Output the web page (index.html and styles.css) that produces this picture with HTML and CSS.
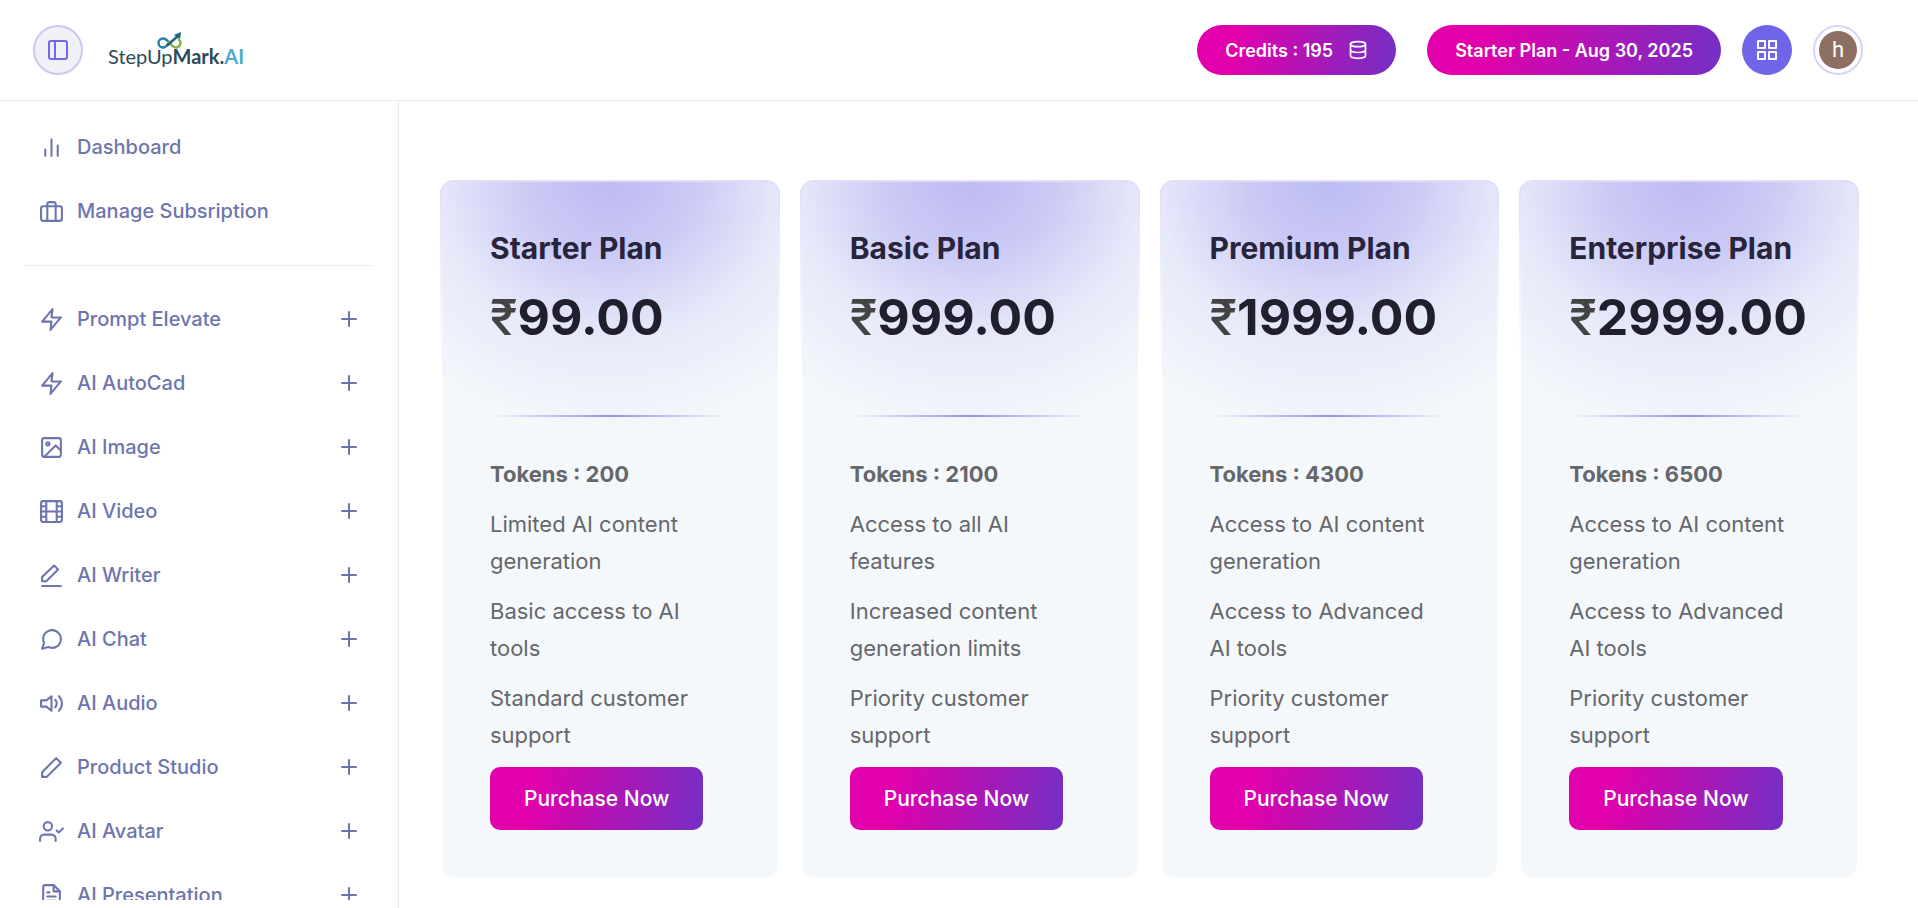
FILE: index.html
```html
<!DOCTYPE html>
<html lang="en">
<head>
    <meta charset="UTF-8">
    <meta name="viewport" content="width=device-width, initial-scale=1.0">
    <title>StepUpMark.AI - Plans</title>
    <link rel="stylesheet" href="styles.css">
</head>
<body>
    <header class="header">
        <button class="round-btn toggle-btn" type="button" aria-label="Toggle sidebar">
            <svg class="icon" viewBox="0 0 24 24"><rect x="3" y="3" width="18" height="18" rx="2"/><path d="M9 3v18"/></svg>
        </button>
        <a class="logo" href="#">
            <svg class="logo-mark" viewBox="0 0 26 18">
                <path d="M13 10C10 14 8.500 15.500 6 15.500A4.500 4.500 0 0 1 6 6.500C9 6.500 11 9 13 11.500" fill="none" stroke="#2384a5" stroke-width="2.500"/>
                <path d="M11 9c3 4 5 6.500 8 6.500A4.500 4.500 0 0 0 21 7" fill="none" stroke="#8fae45" stroke-width="2.500"/>
                <path d="M10 13.500L21 4" fill="none" stroke="#1c6680" stroke-width="2.500"/>
                <path d="M17 3l7-3-1 7z" fill="#1c6680"/>
            </svg>
            <span>StepUp<b>Mark.</b><b class="logo-ai">AI</b></span>
        </a>
        <div class="header-right">
            <a class="pill credits" href="#">Credits : 195
                <svg class="icon" viewBox="0 0 24 24"><ellipse cx="12" cy="5" rx="9" ry="3"/><path d="M21 12c0 1.660-4 3-9 3s-9-1.340-9-3"/><path d="M3 5v14c0 1.660 4 3 9 3s9-1.340 9-3V5"/></svg>
            </a>
            <a class="pill plan" href="#">Starter Plan - Aug 30, 2025</a>
            <button class="round-btn apps-btn" type="button" aria-label="Apps">
                <svg class="icon" viewBox="0 0 24 24"><rect x="3" y="3" width="7" height="7"/><rect x="14" y="3" width="7" height="7"/><rect x="14" y="14" width="7" height="7"/><rect x="3" y="14" width="7" height="7"/></svg>
            </button>
            <button class="round-btn avatar-btn" type="button" aria-label="Account"><span class="avatar">h</span></button>
        </div>
    </header>

    <div class="layout">
        <aside class="sidebar">
            <nav class="nav">
                <ul class="nav-list nav-top">
                    <li><a href="#"><svg class="icon" viewBox="0 0 24 24"><path d="M18 20V10M12 20V4M6 20v-6"/></svg><span>Dashboard</span></a></li>
                    <li><a href="#"><svg class="icon" viewBox="0 0 24 24"><rect x="2" y="7" width="20" height="14" rx="2"/><path d="M16 21V5a2 2 0 0 0-2-2h-4a2 2 0 0 0-2 2v16"/></svg><span>Manage Subsription</span></a></li>
                </ul>
                <ul class="nav-list">
                    <li><a href="#"><svg class="icon" viewBox="0 0 24 24"><path d="M13 2L3 14h9l-1 8 10-12h-9l1-8z"/></svg><span>Prompt Elevate</span><svg class="icon plus" viewBox="0 0 24 24"><path d="M12 5v14M5 12h14"/></svg></a></li>
                    <li><a href="#"><svg class="icon" viewBox="0 0 24 24"><path d="M13 2L3 14h9l-1 8 10-12h-9l1-8z"/></svg><span>AI AutoCad</span><svg class="icon plus" viewBox="0 0 24 24"><path d="M12 5v14M5 12h14"/></svg></a></li>
                    <li><a href="#"><svg class="icon" viewBox="0 0 24 24"><rect x="3" y="3" width="18" height="18" rx="2"/><circle cx="8.500" cy="8.500" r="1.500"/><path d="M21 15l-5-5L5 21"/></svg><span>AI Image</span><svg class="icon plus" viewBox="0 0 24 24"><path d="M12 5v14M5 12h14"/></svg></a></li>
                    <li><a href="#"><svg class="icon" viewBox="0 0 24 24"><rect x="2" y="2" width="20" height="20" rx="2"/><path d="M7 2v20M17 2v20M2 12h20M2 7h5M2 17h5M17 17h5M17 7h5"/></svg><span>AI Video</span><svg class="icon plus" viewBox="0 0 24 24"><path d="M12 5v14M5 12h14"/></svg></a></li>
                    <li><a href="#"><svg class="icon" viewBox="0 0 24 24"><path d="M14.500 2.500l3.800 3.800L7 17.500H3v-4z"/><path d="M3 22h18"/></svg><span>AI Writer</span><svg class="icon plus" viewBox="0 0 24 24"><path d="M12 5v14M5 12h14"/></svg></a></li>
                    <li><a href="#"><svg class="icon" viewBox="0 0 24 24"><path d="M21 11.500a8.380 8.380 0 0 1-.9 3.800 8.500 8.500 0 0 1-7.600 4.700 8.380 8.380 0 0 1-3.800-.9L3 21l1.900-5.700a8.380 8.380 0 0 1-.9-3.800 8.500 8.500 0 0 1 4.700-7.600 8.380 8.380 0 0 1 3.800-.9h.5a8.480 8.480 0 0 1 8 8v.5z"/></svg><span>AI Chat</span><svg class="icon plus" viewBox="0 0 24 24"><path d="M12 5v14M5 12h14"/></svg></a></li>
                    <li><a href="#"><svg class="icon" viewBox="0 0 24 24"><path d="M12 5L7 9H2v6h5l5 4V5z"/><path d="M19.070 4.930a10 10 0 0 1 0 14.140M15.540 8.460a5 5 0 0 1 0 7.070"/></svg><span>AI Audio</span><svg class="icon plus" viewBox="0 0 24 24"><path d="M12 5v14M5 12h14"/></svg></a></li>
                    <li><a href="#"><svg class="icon" viewBox="0 0 24 24"><path d="M16.500 3L21 7.500 7.500 21H3v-4.500z"/></svg><span>Product Studio</span><svg class="icon plus" viewBox="0 0 24 24"><path d="M12 5v14M5 12h14"/></svg></a></li>
                    <li><a href="#"><svg class="icon" viewBox="0 0 24 24"><path d="M16 21v-2a4 4 0 0 0-4-4H5a4 4 0 0 0-4 4v2"/><circle cx="8.500" cy="7" r="4"/><path d="M17 11l2 2 4-4"/></svg><span>AI Avatar</span><svg class="icon plus" viewBox="0 0 24 24"><path d="M12 5v14M5 12h14"/></svg></a></li>
                    <li><a href="#"><svg class="icon" viewBox="0 0 24 24"><path d="M14 2H6a2 2 0 0 0-2 2v16a2 2 0 0 0 2 2h12a2 2 0 0 0 2-2V8z"/><path d="M14 2v6h6M16 13H8M16 17H8M10 9H8"/></svg><span>AI Presentation</span><svg class="icon plus" viewBox="0 0 24 24"><path d="M12 5v14M5 12h14"/></svg></a></li>
                </ul>
            </nav>
        </aside>

        <main class="main">
            <div class="plans">
                <section class="card">
                    <h2>Starter Plan</h2>
                    <p class="price"><span>₹</span>99.00</p>
                    <ul class="features">
                        <li><strong>Tokens : 200</strong></li>
                        <li>Limited AI content generation</li>
                        <li>Basic access to AI tools</li>
                        <li>Standard customer support</li>
                    </ul>
                    <button class="buy" type="button">Purchase Now</button>
                </section>
                <section class="card">
                    <h2>Basic Plan</h2>
                    <p class="price"><span>₹</span>999.00</p>
                    <ul class="features">
                        <li><strong>Tokens : 2100</strong></li>
                        <li>Access to all AI features</li>
                        <li>Increased content generation limits</li>
                        <li>Priority customer support</li>
                    </ul>
                    <button class="buy" type="button">Purchase Now</button>
                </section>
                <section class="card">
                    <h2>Premium Plan</h2>
                    <p class="price"><span>₹</span>1999.00</p>
                    <ul class="features">
                        <li><strong>Tokens : 4300</strong></li>
                        <li>Access to AI content generation</li>
                        <li>Access to Advanced AI tools</li>
                        <li>Priority customer support</li>
                    </ul>
                    <button class="buy" type="button">Purchase Now</button>
                </section>
                <section class="card">
                    <h2>Enterprise Plan</h2>
                    <p class="price"><span>₹</span>2999.00</p>
                    <ul class="features">
                        <li><strong>Tokens : 6500</strong></li>
                        <li>Access to AI content generation</li>
                        <li>Access to Advanced AI tools</li>
                        <li>Priority customer support</li>
                    </ul>
                    <button class="buy" type="button">Purchase Now</button>
                </section>
            </div>
        </main>
    </div>
</body>
</html>
```
FILE: styles.css
```css
* {
    box-sizing: border-box;
}
body {
    margin: 0;
    height: 100vh;
    display: flex;
    flex-direction: column;
    font-family: Inter, sans-serif;
    background-color: #fff;
}
ul {
    list-style: none;
    margin: 0;
    padding: 0;
}
a {
    color: inherit;
    text-decoration: none;
}
button {
    font-family: inherit;
    cursor: pointer;
}
.icon {
    width: 25px;
    height: 25px;
    flex: none;
    fill: none;
    stroke: currentColor;
    stroke-width: 2;
    stroke-linecap: round;
    stroke-linejoin: round;
}

/* header */
.header {
    display: flex;
    align-items: center;
    padding: 25px 55px 25px 33px;
    border-bottom: 1px solid #ebebeb;
}
.header-right {
    display: flex;
    align-items: center;
    gap: 21px;
    margin-left: auto;
}
.round-btn {
    display: flex;
    align-items: center;
    justify-content: center;
    width: 50px;
    height: 50px;
    padding: 0;
    border: none;
    border-radius: 50%;
}
.round-btn .icon {
    width: 24px;
    height: 24px;
}
.toggle-btn {
    border: 2px solid #cdc8f3;
    background-color: #f0f1f6;
    color: #7367f0;
}
.logo {
    position: relative;
    margin-left: 25px;
    font-family: Lato, sans-serif;
    font-size: 20px;
    line-height: 24px;
    padding-top: 12px;
    color: #2b4a59;
}
.logo-ai {
    color: #4fabc9;
}
.logo-mark {
    position: absolute;
    left: 49px;
    top: 0;
    width: 26px;
    height: 18px;
}
.pill {
    display: flex;
    align-items: center;
    height: 50px;
    padding: 0 28px;
    border-radius: 25px;
    background: linear-gradient(99deg, #e100ab 20%, #742fc4 100%);
    color: #fff;
    font-size: 18px;
    font-weight: 600;
}
.credits {
    gap: 15px;
    margin-right: 10px;
}
.credits .icon {
    width: 20px;
    height: 20px;
}
.apps-btn {
    background-color: #7065e8;
    color: #fff;
}
.avatar-btn {
    border: 2px solid #d8d4f7;
    background-color: #fff;
}
.avatar {
    width: 38px;
    height: 38px;
    border-radius: 50%;
    background-color: #8d6e63;
    color: #fff;
    font-family: Roboto, sans-serif;
    font-size: 22px;
    line-height: 38px;
}

/* sidebar */
.layout {
    flex: 1;
    display: flex;
    min-height: 0;
}
.sidebar {
    width: 399px;
    flex: none;
    padding: 14px 25px 8px 24px;
    border-right: 1px solid #ebebeb;
}
.nav {
    height: 100%;
    overflow: hidden;
}
.nav-top {
    padding-bottom: 22px;
    margin-bottom: 21px;
    border-bottom: 1px solid #ebebeb;
}
.nav-list a {
    display: flex;
    align-items: center;
    gap: 13px;
    height: 64px;
    padding: 0 12px 0 15px;
    color: #6e75ae;
    font-size: 20px;
    font-weight: 500;
}
.nav-list .plus {
    width: 24px;
    height: 24px;
    margin-left: auto;
}

/* plans */
.main {
    flex: 1;
    min-width: 0;
    overflow-y: auto;
    padding: 79px 59px 20px 41px;
}
.plans {
    display: grid;
    grid-template-columns: repeat(4, 1fr);
    gap: 20px;
}
.card {
    padding: 46px 48px 47px;
    border: 2px solid transparent;
    border-radius: 14px;
    background:
        radial-gradient(ellipse 280px 250px at 50% 0, rgba(112, 101, 232, 0.42) 0%, rgba(112, 101, 232, 0.31) 30%, rgba(112, 101, 232, 0.1) 62%, rgba(112, 101, 232, 0) 100%) padding-box,
        linear-gradient(#f4f8fb, #f4f8fb) padding-box,
        linear-gradient(#e0ddf9, #fff 25%) border-box;
}
.card h2 {
    margin: 0;
    font-size: 30px;
    line-height: 40px;
    font-weight: 700;
    color: #28243c;
}
.price {
    margin: 18px 0 0;
    padding-bottom: 69px;
    font-size: 50px;
    line-height: 62px;
    font-weight: 700;
    white-space: nowrap;
    color: #211f2d;
    background: linear-gradient(90deg, rgba(112, 101, 232, 0), rgba(112, 101, 232, 0.7), rgba(112, 101, 232, 0)) bottom / 100% 2px no-repeat;
}
.price span {
    font-weight: 500;
    color: #444;
}
.features {
    display: flex;
    flex-direction: column;
    gap: 13px;
    margin-top: 39px;
    font-size: 22px;
    line-height: 37px;
    color: #66676b;
}
.features strong {
    font-weight: 700;
}
.buy {
    display: block;
    height: 63px;
    margin-top: 13px;
    padding: 0 34px;
    border: none;
    border-radius: 10px;
    background: linear-gradient(99deg, #e100ab 20%, #742fc4 100%);
    color: #fff;
    font-size: 21px;
    font-weight: 500;
}
```
